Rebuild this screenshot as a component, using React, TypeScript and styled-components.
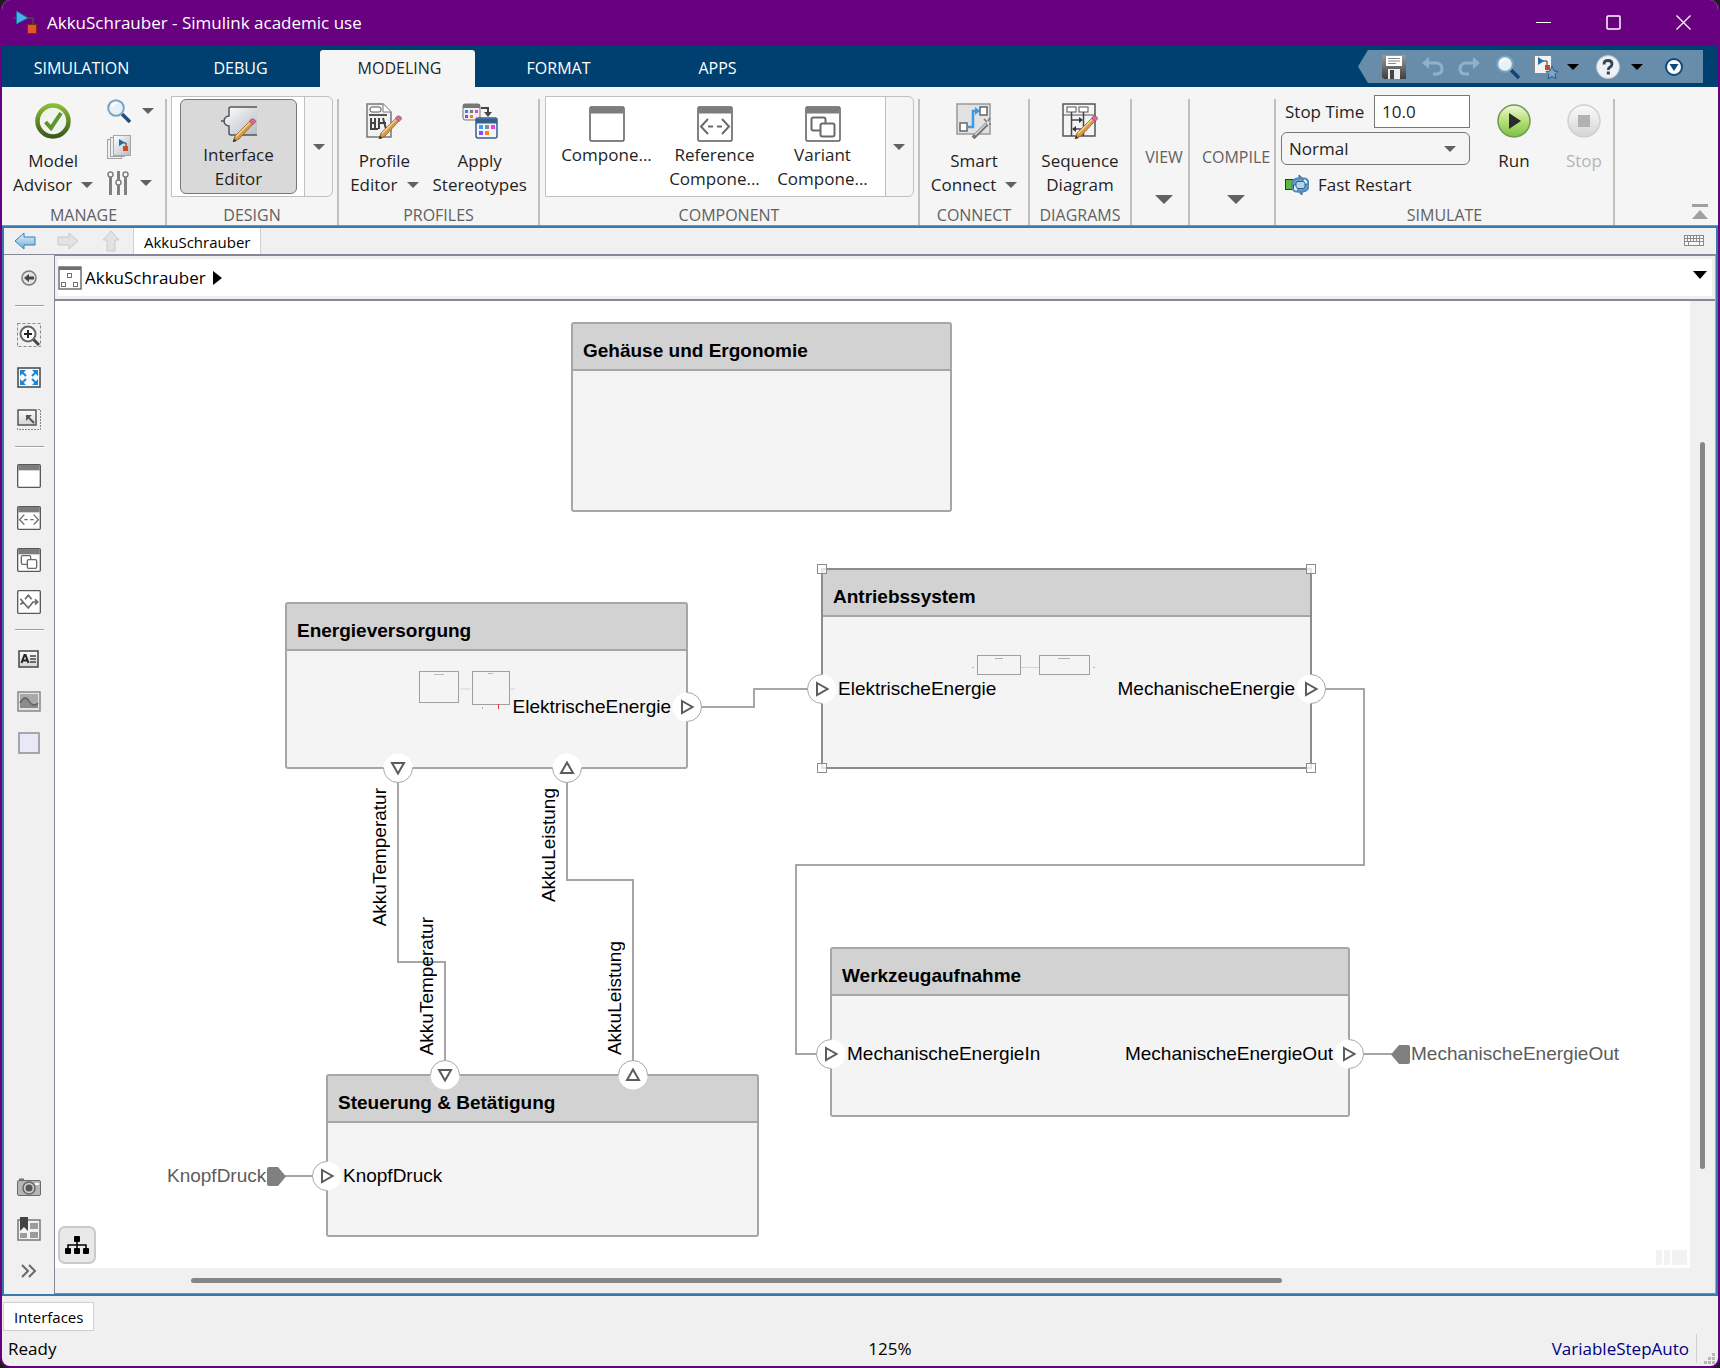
import React from "react";
import styled, { createGlobalStyle, css } from "styled-components";

const uiFont = `"Open Sans", "Noto Sans", sans-serif`;
const canvasFont = `"Liberation Sans", Arial, sans-serif`;

const color = {
  purple: "#68007f",
  navy: "#004070",
  ribbon: "#f5f5f5",
  panel: "#f0f0f0",
  frame: "#3a79ad",
  rule: "#868995",
  divider: "#c0c0c0",
  text: "#1f1f1f",
  muted: "#616161",
};

const GlobalStyle = createGlobalStyle`
  *, *::before, *::after { box-sizing: border-box; }
  body { margin: 0; background: #1c1c1c; }
  button, input, select { font: inherit; color: inherit; margin: 0; }
  button { background: none; border: 0; padding: 0; }
  svg { display: block; flex: none; }
`;

/* ---------- window ---------- */

const Window = styled.div`
  display: flex;
  flex-direction: column;
  min-height: 100vh;
  border: 2px solid ${color.purple};
  border-top: 0;
  border-radius: 10px;
  overflow: hidden;
  background: ${color.panel};
  color: ${color.text};
  font: 17px/24px ${uiFont};
`;

const TitleBar = styled.header`
  display: flex;
  align-items: center;
  height: 45px;
  padding-left: 11px;
  background: ${color.purple};
  color: #fff;
`;

const WindowTitle = styled.h1`
  flex: 1;
  margin: 0 0 0 8px;
  font-size: 17px;
  font-weight: 400;
`;

const WindowButton = styled.button`
  display: grid;
  place-items: center;
  width: 70px;
  height: 45px;
`;

const TabStrip = styled.nav`
  display: flex;
  align-items: flex-end;
  justify-content: space-between;
  height: 42px;
  padding: 0 15px 0 0;
  background: ${color.navy};
`;

const TabList = styled.div`
  display: flex;
  gap: 4px;
`;

const RibbonTab = styled.button<{ $active?: boolean }>`
  width: 155px;
  height: 37px;
  padding: 0 0 2px 4px;
  border-radius: 3px 3px 0 0;
  font-size: 16px;
  color: ${(p) => (p.$active ? color.text : "#fff")};
  background: ${(p) => (p.$active ? color.ribbon : "transparent")};
`;

const QuickAccess = styled.div`
  display: flex;
  align-items: center;
  height: 33px;
  margin-bottom: 4px;
  padding: 0 17px 0 24px;
  background: #688dab;
  clip-path: polygon(10px 0, 100% 0, 100% 100%, 10px 100%, 0 50%);
`;

const QuickButton = styled.button<{ $gap?: number }>`
  display: grid;
  place-items: center;
  margin-right: ${(p) => p.$gap ?? 14}px;
`;

/* ---------- ribbon ---------- */

const Ribbon = styled.div`
  display: flex;
  min-height: 139px;
  padding-top: 8px;
  background: ${color.ribbon};
  border-bottom: 1px solid #8f8f8f;
`;

const Section = styled.section<{ $min: number }>`
  display: flex;
  flex-direction: column;
  min-width: ${(p) => p.$min}px;
`;

const SectionBody = styled.div<{ $align?: string; $pad?: number }>`
  display: flex;
  flex: 1;
  align-items: flex-start;
  justify-content: ${(p) => p.$align ?? "center"};
  padding-left: ${(p) => p.$pad ?? 0}px;
`;

const SectionLabel = styled.h2`
  margin: 0;
  font-size: 16px;
  font-weight: 400;
  line-height: 20px;
  text-align: center;
  color: ${color.muted};
`;

const Divider = styled.div`
  width: 2px;
  margin-top: 4px;
  background: ${color.divider};
`;

const RibbonButton = styled.button<{ $dim?: boolean; $w?: number }>`
  display: flex;
  flex-direction: column;
  align-items: center;
  gap: 10px;
  padding-top: 8px;
  ${(p) => p.$w && css`width: ${p.$w}px;`}
  color: ${(p) => (p.$dim ? "#b4b4b4" : color.text)};
  & + & { margin-left: 14px; }
`;

const ButtonLabel = styled.span`
  display: flex;
  flex-direction: column;
  align-items: center;
  white-space: nowrap;
`;

const LabelLine = styled.span`
  display: flex;
  align-items: center;
  gap: 9px;
`;

const SmallTools = styled.div`
  display: flex;
  flex-direction: column;
  gap: 12px;
  margin: 4px 0 0 14px;
`;

const SmallTool = styled.button`
  display: flex;
  align-items: center;
  gap: 11px;
  height: 24px;
`;

const Gallery = styled.div`
  display: flex;
  margin-top: 1px;
  height: 101px;
  border: 1px solid ${color.divider};
  border-radius: 0 6px 6px 0;
`;

const GalleryItems = styled.div<{ $pad: string }>`
  display: flex;
  padding: ${(p) => p.$pad};
  background: #fff;
  border-right: 1px solid ${color.divider};
`;

const GalleryItem = styled.button<{ $pressed?: boolean; $w: number }>`
  display: flex;
  flex-direction: column;
  align-items: center;
  gap: 1px;
  width: ${(p) => p.$w}px;
  height: 95px;
  padding-top: 6px;
  border: 1px solid ${(p) => (p.$pressed ? "#777" : "transparent")};
  border-radius: 6px;
  background: ${(p) => (p.$pressed ? "#d9d9d9" : "transparent")};
`;

const GalleryMore = styled.button`
  display: grid;
  place-items: center;
  width: 27px;
`;

const Collapsed = styled.button`
  display: flex;
  flex: 1;
  flex-direction: column;
  align-items: center;
  padding: 50px 0 0 8px;
  gap: 26px;
  font-size: 16px;
  color: ${color.muted};
`;

const Fields = styled.div`
  display: flex;
  flex-direction: column;
  gap: 4px;
  width: 189px;
  margin-right: 16px;
`;

const FieldRow = styled.div`
  display: flex;
  align-items: center;
  justify-content: space-between;
  padding-left: 4px;
`;

const TextInput = styled.input`
  width: 96px;
  height: 33px;
  padding: 0 7px;
  border: 1px solid #777;
  background: #fff;
`;

const SelectWrap = styled.div`
  display: grid;
  align-items: center;
  & > * { grid-area: 1 / 1; }
  & > svg { justify-self: end; margin-right: 14px; pointer-events: none; }
`;

const Select = styled.select`
  appearance: none;
  height: 33px;
  padding: 0 7px;
  border: 1px solid #777;
  border-radius: 6px;
  background: ${color.ribbon};
`;

const FastRestart = styled.button`
  display: flex;
  align-items: center;
  gap: 9px;
  height: 32px;
  padding-left: 4px;
`;

const CollapseRibbon = styled.button`
  align-self: flex-end;
  margin: 0 10px 5px auto;
`;

/* ---------- editor ---------- */

const Frame = styled.main`
  display: flex;
  flex: 1;
  flex-direction: column;
  border: 2px solid ${color.frame};
`;

const NavBar = styled.div`
  display: flex;
  align-items: center;
  height: 27px;
  padding: 0 12px 0 10px;
  border-bottom: 1px solid ${color.rule};
`;

const NavButtons = styled.div`
  display: flex;
  align-items: center;
  gap: 21px;
  margin-right: 11px;
`;

const DocTab = styled.button`
  align-self: stretch;
  padding: 2px 10px 0;
  border: 1px solid #d0d0d0;
  border-width: 0 1px;
  background: #fff;
  font-size: 15px;
  color: #000;
`;

const DockTab = styled(DocTab)`
  height: 29px;
  padding: 0 10px;
  border-width: 1px;
`;

const NavEnd = styled.button`
  margin-left: auto;
`;

const Workspace = styled.div`
  display: flex;
  flex: 1;
`;

const Palette = styled.aside`
  display: flex;
  flex-direction: column;
  align-items: center;
  width: 50px;
  padding: 2px 0;
`;

const PaletteButton = styled.button`
  display: grid;
  place-items: center;
  width: 42px;
  height: 42px;
`;

const PaletteRule = styled.hr`
  width: 29px;
  height: 2px;
  margin: 6px 0 7px;
  border: 0;
  border-top: 1px solid #a0a0a0;
  background: #fff;
`;

const PaletteSpacer = styled.div`
  flex: 1;
`;

const EditorPane = styled.div`
  display: flex;
  flex: 1;
  flex-direction: column;
  min-width: 0;
  border: 1px solid ${color.rule};
  border-right-color: #a8a8a8;
`;

const Breadcrumb = styled.div`
  display: flex;
  align-items: center;
  height: 45px;
  padding: 3px;
  border-bottom: 2px solid ${color.rule};
`;

const CrumbPath = styled.div`
  display: flex;
  flex: 1;
  align-items: center;
  gap: 3px;
  height: 100%;
  padding: 0 5px 0 0;
  background: #fff;
  color: #000;
`;

const CrumbLink = styled.a`
  margin-right: 4px;
  color: inherit;
  text-decoration: none;
`;

const CrumbMenu = styled.button`
  margin: 0 0 6px auto;
`;

const CanvasGrid = styled.div`
  display: grid;
  flex: 1;
  grid-template-columns: 1fr 25px;
  grid-template-rows: 1fr 25px;
`;

const Canvas = styled.div`
  position: relative;
  background: #fff;
  color: #000;
  font: 19px/22px ${canvasFont};
  overflow: hidden;
`;

const VTrack = styled.div`
  display: grid;
  grid-template-rows: 141fr 727fr 99fr;
  justify-items: center;
`;

const HTrack = styled.div`
  display: grid;
  grid-template-columns: 136fr 1091fr 408fr;
  align-items: center;
`;

const Thumb = styled.div<{ $vertical?: boolean }>`
  border-radius: 3px;
  background: #868686;
  ${(p) =>
    p.$vertical
      ? css`grid-row: 2; width: 5px; height: 100%;`
      : css`grid-column: 2; height: 5px;`}
`;

const Wires = styled.svg`
  position: absolute;
  left: 0;
  top: 0;
`;

const BlockBox = styled.div<{ $x: number; $y: number; $w: number; $h: number; $selected?: boolean }>`
  position: absolute;
  left: ${(p) => p.$x}px;
  top: ${(p) => p.$y}px;
  width: ${(p) => p.$w}px;
  height: ${(p) => p.$h}px;
  border: 2px solid ${(p) => (p.$selected ? "#8c8c8c" : "#a6a6a6")};
  border-radius: ${(p) => (p.$selected ? 0 : 3)}px;
  background: #f4f4f4;
`;

const BlockTitle = styled.h3`
  height: 47px;
  margin: 0;
  padding: 16px 10px 0;
  border-bottom: 2px solid #a6a6a6;
  background: #d2d2d2;
  font-size: 19px;
  font-weight: 700;
  line-height: 22px;
`;

const PortBox = styled.div<{ $x: number; $y: number }>`
  position: absolute;
  left: ${(p) => p.$x - 17}px;
  top: ${(p) => p.$y - 17}px;
  width: 30px;
  height: 30px;
`;

type Side = "left" | "right" | "top" | "bottom";

const PortLabel = styled.span<{ $side: Side }>`
  position: absolute;
  white-space: nowrap;
  ${(p) =>
    p.$side === "left"
      ? css`left: 31px; top: 4px;`
      : p.$side === "right"
        ? css`right: 31px; top: 4px;`
        : css`
            left: -14px;
            ${p.$side === "bottom" ? "top" : "bottom"}: 35px;
            writing-mode: vertical-rl;
            transform: rotate(180deg);
          `}
`;

const Handle = styled.i<{ $right?: boolean; $bottom?: boolean }>`
  position: absolute;
  width: 10px;
  height: 10px;
  border: 1px solid #8c8c8c;
  background: rgba(255, 255, 255, 0.75);
  ${(p) => (p.$right ? "right" : "left")}: -6px;
  ${(p) => (p.$bottom ? "bottom" : "top")}: -6px;
`;

const Preview = styled.svg<{ $x: number; $y: number }>`
  position: absolute;
  left: ${(p) => p.$x}px;
  top: ${(p) => p.$y}px;
`;

const Terminal = styled.div<{ $x: number; $y: number; $flip?: boolean }>`
  position: absolute;
  left: ${(p) => p.$x}px;
  top: ${(p) => p.$y}px;
  display: flex;
  flex-direction: ${(p) => (p.$flip ? "row-reverse" : "row")};
  align-items: center;
  gap: 1px;
  color: #5c5c5c;
`;

const TreeButton = styled.button`
  position: absolute;
  left: 3px;
  bottom: 4px;
  display: grid;
  place-items: center;
  width: 38px;
  height: 38px;
  border: 2px solid #cacaca;
  border-radius: 7px;
  background: #e9e9e9;
`;

const Watermark = styled.div`
  position: absolute;
  right: 3px;
  bottom: 3px;
  display: flex;
  gap: 2px;
  & > i { width: 6px; height: 15px; background: #f2f2f2; }
  & > i:last-child { width: 15px; }
`;

/* ---------- bottom ---------- */

const Dock = styled.div`
  display: flex;
  padding: 6px 1px 0;
`;

const StatusBar = styled.footer`
  display: grid;
  grid-template-columns: 16fr auto 15fr;
  align-items: center;
  height: 35px;
  padding-left: 6px;
  color: #000;
`;

const StatusEnd = styled.div`
  display: flex;
  align-items: center;
  justify-content: flex-end;
  align-self: stretch;
  gap: 7px;
`;

const SolverLink = styled.a`
  color: #000080;
  text-decoration: none;
`;

const StatusRule = styled.div`
  width: 1px;
  height: 29px;
  background: #d0d0d0;
`;

const GripSlot = styled.div`
  align-self: flex-end;
  margin: 0 3px 2px 0;
`;

/* ---------- icons ---------- */

const Caret = ({ w = 12, h = 6, fill = "#616161" }: { w?: number; h?: number; fill?: string }) => (
  <svg width={w} height={h}>
    <path d={`M0 0H${w}L${w / 2} ${h}Z`} fill={fill} />
  </svg>
);

const HiddenSvg = styled.svg`
  position: absolute;
`;

const Gradients = () => (
  <HiddenSvg width="0" height="0" aria-hidden="true">
    <defs>
      <linearGradient id="steel" x1="0" y1="0" x2="1" y2="1">
        <stop offset="0" stopColor="#fff" />
        <stop offset="1" stopColor="#b5bcc3" />
      </linearGradient>
      <linearGradient id="sky" x1="0" y1="0" x2="0" y2="1">
        <stop offset="0" stopColor="#e4f3fb" />
        <stop offset="1" stopColor="#6eaed6" />
      </linearGradient>
      <linearGradient id="leaf" x1="0" y1="0" x2="0" y2="1">
        <stop offset="0" stopColor="#eff8d8" />
        <stop offset="0.5" stopColor="#b6e07a" />
        <stop offset="1" stopColor="#7cc043" />
      </linearGradient>
      <linearGradient id="ring" x1="0" y1="0" x2="0" y2="1">
        <stop offset="0" stopColor="#8bbb33" />
        <stop offset="1" stopColor="#3c5a1c" />
      </linearGradient>
      <linearGradient id="ash" x1="0" y1="0" x2="0" y2="1">
        <stop offset="0" stopColor="#fbfbfb" />
        <stop offset="1" stopColor="#d4d4d4" />
      </linearGradient>
      <linearGradient id="iron" x1="0" y1="0" x2="0" y2="1">
        <stop offset="0" stopColor="#9a9a9a" />
        <stop offset="1" stopColor="#3e3e3e" />
      </linearGradient>
    </defs>
  </HiddenSvg>
);

const Pencil = ({ x = 0, y = 0 }: { x?: number; y?: number }) => (
  <g transform={`translate(${x} ${y})`}>
    <path d="M1 24L3 18L18 3L21 6L7 21Z" fill="#d69a4a" stroke="#8a5a22" strokeWidth="0.8" />
    <path d="M4 18.500L18 4.500" stroke="#f6d496" strokeWidth="1.500" />
    <path d="M17.500 3L19.500 1Q22 0 24 3.500L21 6.500Z" fill="#dc6a92" stroke="#a8446c" strokeWidth="0.8" />
    <path d="M1 24L2 20.500L4.500 23Z" fill="#333" />
  </g>
);

const AppIcon = () => (
  <svg width="26" height="26">
    <path d="M0 8H4M12 8H20V15" fill="none" stroke="#4a4a4a" strokeWidth="1.5" />
    <path d="M3.500 1L15 8L3.500 14Z" fill="#49b2e6" stroke="#1c6c9e" />
    <rect x="14.500" y="14.500" width="9" height="9" fill="#e0562a" stroke="#7e2a0c" />
  </svg>
);

const CheckIcon = () => (
  <svg width="36" height="36">
    <circle cx="18" cy="18" r="15.5" fill="#f1f3ee" stroke="url(#ring)" strokeWidth="4.5" />
    <path d="M10.500 19L16 25L26 10" fill="none" stroke="#5d9628" strokeWidth="4" />
  </svg>
);

const Magnifier = ({ dark = "#1f4f7e" }: { dark?: string }) => (
  <svg width="24" height="24">
    <path d="M15 15L23 23" stroke={dark} strokeWidth="3.5" />
    <circle cx="9" cy="9" r="7.800" fill="#e6f1f8" stroke="#7ba4c2" strokeWidth="2" />
    <path d="M4.500 8Q6 4 10 4" fill="none" stroke="#fff" strokeWidth="2" />
  </svg>
);

const ModelPagesIcon = () => (
  <svg width="24" height="24">
    <rect x="0.500" y="4.500" width="14" height="19" fill="#eee" stroke="#a5a5a5" />
    <rect x="3.500" y="2.500" width="14" height="19" fill="#eee" stroke="#a5a5a5" />
    <rect x="6.500" y="0.500" width="17" height="20" fill="url(#steel)" stroke="#a5a5a5" />
    <path d="M12 4L18 7.500L12 11Z" fill="#1f6fa8" />
    <path d="M17 8H19V11" fill="none" stroke="#333" />
    <rect x="16" y="11" width="5" height="5" fill="#d14b22" />
  </svg>
);

const SlidersIcon = () => (
  <svg width="22" height="24" fill="#fff" stroke="#808080">
    <path d="M3.500 6V24M11.500 0V24M18.500 6V24" strokeWidth="3" />
    <circle cx="3.500" cy="3.500" r="2.500" strokeWidth="1.500" />
    <circle cx="11.500" cy="11.500" r="2.500" strokeWidth="1.500" />
    <circle cx="18.500" cy="3.500" r="2.500" strokeWidth="1.500" />
  </svg>
);

const InterfaceIcon = () => (
  <svg width="36" height="36">
    <path d="M36 1H10Q8 1 8 3V10A5 5 0 0 0 8 20V27Q8 29 10 29H36Z" fill="url(#steel)" />
    <path d="M36 1H10Q8 1 8 3V10A5 5 0 0 0 8 20V27Q8 29 10 29H36M0 15H4" fill="none" stroke="#555" strokeWidth="1.500" />
    <Pencil x={11} y={12} />
  </svg>
);

const ProfileIcon = () => (
  <svg width="36" height="36">
    <path d="M1 1H17L25 9V34H1Z" fill="#f1f1f1" stroke="#777" strokeWidth="1.500" />
    <path d="M17 1V9H25" fill="#fff" stroke="#777" />
    <rect x="4" y="4" width="11" height="5" rx="2" fill="#fff" stroke="#555" />
    <path d="M3 12H21" stroke="#555" strokeWidth="2" />
    <path d="M5 15V26M9 15V26M4 20H10M13 15V26M17 15L20 26M13 20H20M4 26H12" stroke="#444" strokeWidth="2" />
    <Pencil x={12} y={12} />
  </svg>
);

const StereotypeIcon = () => (
  <svg width="36" height="36">
    <rect x="1" y="1" width="17" height="16" rx="2" fill="#eee" stroke="#777" />
    <path d="M1 3H18" stroke="#777" strokeWidth="4" />
    <path d="M19 5H26V10" fill="none" stroke="#444" strokeWidth="2" />
    <path d="M22 9H30L26 14Z" fill="#444" />
    <rect x="3" y="7" width="3" height="3" fill="#3b7df0" />
    <rect x="8" y="7" width="3" height="3" fill="#777" />
    <rect x="13" y="7" width="3" height="3" fill="#e83be0" />
    <rect x="3" y="12" width="3" height="3" fill="#9a3bf0" />
    <rect x="8" y="12" width="3" height="3" fill="#ff7a1a" />
    <rect x="14" y="15" width="21" height="20" rx="2" fill="#f2f6fa" stroke="#35608c" strokeWidth="1.500" />
    <path d="M14 18H35" stroke="#35608c" strokeWidth="5" />
    <rect x="17" y="22" width="4" height="4" fill="#3ba0f0" />
    <rect x="23" y="22" width="4" height="4" fill="#888" />
    <rect x="29" y="22" width="4" height="4" fill="#f03be0" />
    <rect x="17" y="28" width="4" height="4" fill="#8a4bf8" />
    <rect x="23" y="28" width="4" height="4" fill="#ff7a1a" />
  </svg>
);

type Kind = "plain" | "reference" | "variant" | "adapter";

const ComponentIcon = ({ kind, size = 36 }: { kind: Kind; size?: number }) => (
  <svg width={size} height={size} viewBox="0 0 36 36">
    <rect x="1" y="1" width="34" height="34" rx="1.500" fill="#fff" stroke="#5a5a5a" strokeWidth={size < 30 ? 2 : 1.5} />
    {kind !== "adapter" && <path d={size < 30 ? "M2 5.500H34" : "M2 4.500H34"} stroke="#7d7d7d" strokeWidth={size < 30 ? 8 : 6} />}
    {kind === "reference" && (
      <path d="M11 13L4 20.500L11 28M25 13L32 20.500L25 28M11 20.500H16M20 20.500H25" fill="none" stroke="#6a6a6a" strokeWidth="2" />
    )}
    {kind === "variant" && (
      <g fill="#fff" stroke="#6a6a6a" strokeWidth="2">
        <rect x="6.500" y="11.500" width="14" height="13" rx="2" />
        <rect x="15.500" y="17.500" width="14" height="13" rx="2" />
      </g>
    )}
    {kind === "adapter" && (
      <path d="M5 13L9 18L5 22M9 18L17 27L24 18H31M12 14L17 8L22 14M27 14L31 18L27 22" fill="none" stroke="#6a6a6a" strokeWidth="2.500" />
    )}
  </svg>
);

const SmartConnectIcon = () => (
  <svg width="36" height="36">
    <rect x="1" y="1" width="33" height="30" fill="#e2e2e2" stroke="#999" strokeWidth="1.500" />
    <path d="M12 24H17V8H22" fill="none" stroke="#3a9be8" strokeWidth="2.500" />
    <path d="M19 4L24 8L19 12Z" fill="#3a9be8" />
    <rect x="24" y="4" width="7" height="8" fill="#fff" stroke="#666" strokeWidth="1.500" />
    <rect x="4" y="20" width="7" height="8" fill="#fff" stroke="#666" strokeWidth="1.500" />
    <path d="M17 35L31 21" stroke="#777" strokeWidth="4" />
    <path d="M19 32L30 21" stroke="#ddd" strokeWidth="1.500" />
    <path d="M28 16L31 19M34 15L32 18M35 21L33 21" stroke="#777" strokeWidth="1.500" />
  </svg>
);

const SequenceIcon = () => (
  <svg width="36" height="36">
    <rect x="1" y="1" width="32" height="32" fill="#f4f4f4" stroke="#555" strokeWidth="1.500" />
    <path d="M1 12H33" stroke="#555" />
    <rect x="5" y="4" width="9" height="5" fill="#fff" stroke="#555" />
    <rect x="17" y="4" width="9" height="5" fill="#fff" stroke="#555" />
    <path d="M9.500 9V33M21.500 9V33M9.500 17H19M21.500 26H12" stroke="#444" strokeWidth="1.500" />
    <path d="M17 14L21 17L17 20ZM14 23L10 26L14 29Z" fill="#333" />
    <Pencil x={12} y={12} />
  </svg>
);

const RunIcon = () => (
  <svg width="36" height="36">
    <circle cx="18" cy="18" r="16" fill="url(#leaf)" stroke="#6f9950" strokeWidth="1.500" />
    <path d="M13 10L25 18L13 26Z" fill="#2b2b2b" />
  </svg>
);

const StopIcon = () => (
  <svg width="36" height="36">
    <circle cx="18" cy="18" r="16" fill="url(#ash)" stroke="#cfcfcf" strokeWidth="1.500" />
    <rect x="12" y="12" width="12" height="12" fill="#b2b2b2" />
  </svg>
);

const FastRestartIcon = () => (
  <svg width="24" height="20">
    <rect x="0.500" y="4.500" width="8" height="10" fill="#5cb83f" stroke="#333" />
    <path d="M7 10Q7 3 14 3V0L19 4.500L14 9V6Q10.500 6 10.500 10ZM24 9Q24 17 17 17V20L12 15.500L17 11V14Q20.500 14 20.500 9Z" fill="#6ea6cf" stroke="#2c648f" />
    <rect x="11" y="6.500" width="9" height="7" rx="2" fill="#b4d3e8" stroke="#2c648f" />
    <path d="M7 10Q7 3.500 14 3.500H19Q23.500 3.500 23.500 10T17 16.500H11Q7 16 7 10Z" fill="none" stroke="#4d8ab8" strokeWidth="2" />
  </svg>
);

const CollapseIcon = () => (
  <svg width="16" height="16" fill="#a0a0a0">
    <rect width="16" height="3" />
    <path d="M8 6L16 15H0Z" />
  </svg>
);

const SaveIcon = () => (
  <svg width="24" height="24">
    <path d="M0 0H24V24H2L0 22Z" fill="url(#iron)" />
    <rect x="4" y="1" width="16" height="10" fill="#fff" />
    <path d="M6 3.500H18M6 6H18M6 8.500H14" stroke="#8a8a8a" />
    <rect x="6" y="14" width="12" height="10" fill="#eee" />
    <rect x="8" y="15" width="4" height="9" fill="#444" />
  </svg>
);

const UndoIcon = ({ flip }: { flip?: boolean }) => (
  <svg width="22" height="20" viewBox="0 0 22 20">
    <g transform={flip ? "matrix(-1 0 0 1 22 0)" : undefined}>
      <path d="M4 6H15Q20 7 20 12T14 17H11" fill="none" stroke="#8fb2cc" strokeWidth="3" />
      <path d="M0 6L7 0V12Z" fill="#8fb2cc" />
    </g>
  </svg>
);

const LibraryIcon = () => (
  <svg width="24" height="24">
    <rect x="0.500" y="0.500" width="17" height="18" fill="#f3f3f3" stroke="#888" />
    <path d="M4 2L10 6L4 10Z" fill="#1f6fa8" />
    <path d="M9 6H13V10" fill="none" stroke="#333" />
    <rect x="11" y="10" width="5" height="5" fill="#cc4422" />
    <path d="M18 11L20 16L24 16.500L21 19.500L22 24L18 21.500L14 24L15 19.500L12 16.500L16 16Z" fill="#7da7c8" stroke="#2d5b84" />
  </svg>
);

const HelpIcon = () => (
  <svg width="24" height="24">
    <circle cx="12" cy="12" r="11.500" fill="#eef1f4" stroke="#b9c6d1" />
    <path d="M8 9.500Q8 5.500 12 5.500T16 9Q16 11 13.500 12.500Q12.300 13.300 12.300 15" fill="none" stroke="#344558" strokeWidth="2.800" />
    <rect x="10.800" y="16.500" width="3" height="3" fill="#344558" />
  </svg>
);

const OptionsIcon = () => (
  <svg width="18" height="18">
    <circle cx="9" cy="9" r="8" fill="#fff" stroke="#0b4a7c" strokeWidth="2" />
    <path d="M4.500 6H13.500L9 13Z" fill="#0b4a7c" />
  </svg>
);

const ArrowIcon = ({ dir, on }: { dir: "left" | "right" | "up"; on?: boolean }) => {
  const turn = { left: 0, right: 180, up: 90 }[dir];
  return (
    <svg width="22" height="22" viewBox="0 0 22 22">
      <path
        d="M1 11L10 3V7H21V15H10V19Z"
        transform={`rotate(${turn} 11 11)`}
        fill={on ? "url(#sky)" : "#e2e2e2"}
        stroke={on ? "#3d7cae" : "#c9c9c9"}
      />
    </svg>
  );
};

const KeyboardIcon = () => (
  <svg width="20" height="12" fill="none" stroke="#8a8a8a">
    <rect x="0.500" y="0.500" width="19" height="10" fill="#f8f8f8" />
    <path d="M0 3.500H20M0 6.500H20M3.500 0V7M6.500 0V7M9.500 0V7M12.500 0V7M15.500 0V7M4.500 7V11M15.500 7V11" />
  </svg>
);

const ModelIcon = () => (
  <svg width="24" height="24" fill="#fff" stroke="#707070">
    <rect x="1" y="1" width="22" height="22" strokeWidth="1.500" />
    <path d="M1 2.500H23" strokeWidth="3" />
    <rect x="9.500" y="7.500" width="4" height="4" />
    <rect x="3.500" y="16.500" width="4" height="4" />
    <rect x="15.500" y="16.500" width="4" height="4" />
  </svg>
);

const HideIcon = () => (
  <svg width="16" height="16">
    <circle cx="8" cy="8" r="7" fill="#e2e2e2" stroke="#7a7a7a" strokeWidth="1.500" />
    <path d="M3 8L8 4V6.500H13V9.500H8V12Z" fill="#444" />
  </svg>
);

const ZoomRegionIcon = () => (
  <svg width="24" height="24">
    <rect x="0.500" y="0.500" width="23" height="23" fill="none" stroke="#888" strokeDasharray="3 2" />
    <path d="M16 16L22 22" stroke="#444" strokeWidth="3" />
    <circle cx="11" cy="11" r="7.500" fill="#fafafa" stroke="#666" strokeWidth="2" />
    <path d="M7 11H15M11 7V15" stroke="#222" strokeWidth="2" />
  </svg>
);

const FitIcon = () => (
  <svg width="24" height="21">
    <rect x="1" y="1" width="22" height="19" fill="#f4f9fd" stroke="#444" strokeWidth="1.500" />
    <path d="M3 3H9L3 9ZM15 3H21V9ZM3 12L9 18H3ZM21 12V18H15Z" fill="#1f86d6" />
    <path d="M5 5L9 9M19 5L15 9M5 16L9 12M19 16L15 12" stroke="#1f86d6" strokeWidth="2" />
  </svg>
);

const ShrinkIcon = () => (
  <svg width="24" height="21">
    <path d="M21 0.500H23.500V20.500H0.500V18" fill="none" stroke="#888" strokeDasharray="2 1" />
    <rect x="1" y="1" width="18" height="15" fill="url(#ash)" stroke="#555" strokeWidth="1.500" />
    <path d="M9 6H15L9 12Z" fill="#555" />
    <path d="M11 8L17 14" stroke="#555" strokeWidth="2" />
  </svg>
);

const AnnotationIcon = () => (
  <svg width="22" height="18">
    <rect x="1" y="1" width="19" height="16" fill="url(#ash)" stroke="#444" strokeWidth="1.500" />
    <path d="M3.500 13L6.500 5H7.500L10.500 13M5 10.500H9.500" fill="none" stroke="#222" strokeWidth="2" />
    <path d="M12 6H18M12 9H18M12 12H18" stroke="#444" strokeWidth="1.500" />
  </svg>
);

const ImageIcon = () => (
  <svg width="24" height="21">
    <rect x="1" y="1" width="22" height="19" fill="#e4e4e4" stroke="#888" strokeWidth="1.500" />
    <rect x="3" y="3" width="18" height="14" fill="#a9a9a9" />
    <path d="M3 12Q8 3 12 10T21 12V17H3Z" fill="#8b8b8b" />
    <path d="M3 12Q8 3 12 10T21 12" fill="none" stroke="#5f5f5f" strokeWidth="1.500" />
  </svg>
);

const AreaIcon = () => (
  <svg width="22" height="22">
    <rect x="1" y="1" width="20" height="20" fill="#e9e8f8" stroke="#8e8e94" strokeWidth="1.500" />
  </svg>
);

const CameraIcon = () => (
  <svg width="24" height="19">
    <rect x="2" y="0.500" width="5" height="3" fill="#777" />
    <rect x="0.500" y="2.500" width="23" height="15" rx="1.500" fill="#b5b5b5" stroke="#6a6a6a" />
    <circle cx="12" cy="10" r="6" fill="#ccc" stroke="#666" strokeWidth="1.500" />
    <circle cx="12" cy="10" r="3.500" fill="#555" />
    <rect x="18" y="5" width="4" height="2" fill="#fff" />
  </svg>
);

const BrowserIcon = () => (
  <svg width="24" height="24">
    <rect x="1" y="3" width="22" height="20" fill="#f2f2f2" stroke="#777" strokeWidth="1.500" />
    <path d="M13 6H21V12H13ZM13 15H21V21H13ZM3 16H10V21H3Z" fill="#9c9c9c" />
    <path d="M3 0H11V14L7 10L3 14Z" fill="#444" />
  </svg>
);

const ChevronsIcon = () => (
  <svg width="16" height="14" fill="none" stroke="#6a6a6a" strokeWidth="2">
    <path d="M1 1L7 7L1 13M8 1L14 7L8 13" />
  </svg>
);

const TreeIcon = () => (
  <svg width="24" height="18">
    <path d="M12 5V13M3 13V9H21V13" fill="none" stroke="#000" strokeWidth="1.500" />
    <rect x="9" y="0" width="6" height="6" rx="1" />
    <rect x="0" y="12" width="6" height="6" rx="1" />
    <rect x="9" y="12" width="6" height="6" rx="1" />
    <rect x="18" y="12" width="6" height="6" rx="1" />
  </svg>
);

const GripIcon = () => (
  <svg width="11" height="11" fill="#b8b8b8">
    <path d="M0 8H3V11H0ZM4 8H7V11H4ZM8 8H11V11H8ZM4 4H7V7H4ZM8 4H11V7H8ZM8 0H11V3H8Z" />
  </svg>
);

const TerminalMark = ({ flip }: { flip?: boolean }) => (
  <svg width="19" height="19" viewBox="0 0 19 19">
    <path d="M2 0H11L19 9.500L11 19H2Q0 19 0 17V2Q0 0 2 0Z" fill="#808080" transform={flip ? "rotate(180 9.500 9.500)" : undefined} />
  </svg>
);

/* ---------- diagram ---------- */

const sideTurn = { left: 180, right: 0, top: 270, bottom: 90 };
const arrowTurn = { right: 0, down: 90, up: 270 };

type PortProps = { x: number; y: number; side: Side; arrow?: keyof typeof arrowTurn; name: string };

const Port = ({ x, y, side, arrow = "right", name }: PortProps) => (
  <PortBox $x={x} $y={y}>
    <svg width="30" height="30" viewBox="0 0 30 30" fill="none">
      <circle cx="15" cy="15" r="14.500" fill="#fff" />
      <path d="M15 0.500A14.500 14.500 0 0 1 15 29.500" stroke="#a6a6a6" transform={`rotate(${sideTurn[side]} 15 15)`} />
      <path d="M10 9L20.500 15L10 21Z" stroke="#5c5c5c" strokeWidth="2" transform={`rotate(${arrowTurn[arrow]} 15 15)`} />
    </svg>
    <PortLabel $side={side}>{name}</PortLabel>
  </PortBox>
);

type BlockProps = {
  x: number;
  y: number;
  w: number;
  h: number;
  title: string;
  selected?: boolean;
  children?: React.ReactNode;
};

const Block = ({ x, y, w, h, title, selected, children }: BlockProps) => (
  <BlockBox $x={x} $y={y} $w={w} $h={h} $selected={selected}>
    <BlockTitle>{title}</BlockTitle>
    {children}
    {selected && (
      <>
        <Handle />
        <Handle $right />
        <Handle $bottom />
        <Handle $right $bottom />
      </>
    )}
  </BlockBox>
);

const Diagram = () => (
  <>
    <Wires width="1600" height="960" fill="none" stroke="#a6a6a6" strokeWidth="2">
      <path d="M646 406H699V388H753" />
      <path d="M1271 388H1309V564H741V753H762" />
      <path d="M343 481V661H390V760" />
      <path d="M512 481V579H578V760" />
      <path d="M230 875H258" />
      <path d="M1308 753H1337" />
    </Wires>

    <Block x={516} y={21} w={381} h={190} title="Gehäuse und Ergonomie" />

    <Block x={230} y={301} w={403} h={167} title="Energieversorgung">
      <Preview $x={131} $y={65} width="98" height="42" fill="none" stroke="#a0a0a0">
        <rect x="1.500" y="2.500" width="39" height="31" />
        <rect x="54.500" y="2.500" width="37" height="33" />
        <path d="M42 20H53M92 20H97" stroke="#d4d4d4" />
        <path d="M16 5.500H26M70 4.500H75M64.500 38V40" stroke="#b8b8b8" />
        <path d="M80.500 35V40" stroke="#e03a3a" />
      </Preview>
      <Port x={402} y={105} side="right" name="ElektrischeEnergie" />
      <Port x={113} y={166} side="bottom" arrow="down" name="AkkuTemperatur" />
      <Port x={282} y={166} side="bottom" arrow="up" name="AkkuLeistung" />
    </Block>

    <Block x={766} y={267} w={491} h={201} title="Antriebssystem" selected>
      <Preview $x={148} $y={83} width="126" height="26" fill="none" stroke="#a0a0a0">
        <rect x="6.500" y="2.500" width="43" height="19" />
        <rect x="68.500" y="2.500" width="50" height="19" />
        <path d="M50 14.500H68" stroke="#d4d4d4" />
        <path d="M24 5.500H32M87 5.500H99M1 14.500H3M122 14.500H124" stroke="#b0b0b0" />
      </Preview>
      <Port x={1} y={121} side="left" name="ElektrischeEnergie" />
      <Port x={490} y={121} side="right" name="MechanischeEnergie" />
    </Block>

    <Block x={775} y={646} w={520} h={170} title="Werkzeugaufnahme">
      <Port x={1} y={107} side="left" name="MechanischeEnergieIn" />
      <Port x={519} y={107} side="right" name="MechanischeEnergieOut" />
    </Block>

    <Block x={271} y={773} w={433} h={163} title="Steuerung & Betätigung">
      <Port x={119} y={1} side="top" arrow="down" name="AkkuTemperatur" />
      <Port x={307} y={1} side="top" arrow="up" name="AkkuLeistung" />
      <Port x={1} y={102} side="left" name="KnopfDruck" />
    </Block>

    <Terminal $x={112} $y={864}>
      KnopfDruck
      <TerminalMark />
    </Terminal>
    <Terminal $x={1336} $y={742} $flip>
      MechanischeEnergieOut
      <TerminalMark flip />
    </Terminal>
  </>
);

/* ---------- page ---------- */

const tabs = ["SIMULATION", "DEBUG", "MODELING", "FORMAT", "APPS"];

const App = () => (
  <>
    <GlobalStyle />
    <Gradients />
    <Window>
      <TitleBar>
        <AppIcon />
        <WindowTitle>AkkuSchrauber - Simulink academic use</WindowTitle>
        <WindowButton aria-label="Minimize">
          <svg width="15" height="15" stroke="#fff"><path d="M0 7.500H15" /></svg>
        </WindowButton>
        <WindowButton aria-label="Maximize">
          <svg width="15" height="15" fill="none" stroke="#fff" strokeWidth="1.500">
            <rect x="1" y="1" width="13" height="13" rx="1" />
          </svg>
        </WindowButton>
        <WindowButton aria-label="Close">
          <svg width="15" height="15" stroke="#fff" strokeWidth="1.300"><path d="M0.500 0.500L14.500 14.500M14.500 0.500L0.500 14.500" /></svg>
        </WindowButton>
      </TitleBar>

      <TabStrip>
        <TabList role="tablist">
          {tabs.map((t) => (
            <RibbonTab key={t} role="tab" aria-selected={t === "MODELING"} $active={t === "MODELING"}>
              {t}
            </RibbonTab>
          ))}
        </TabList>
        <QuickAccess>
          <QuickButton aria-label="Save" $gap={16}><SaveIcon /></QuickButton>
          <QuickButton aria-label="Undo"><UndoIcon /></QuickButton>
          <QuickButton aria-label="Redo" $gap={16}><UndoIcon flip /></QuickButton>
          <QuickButton aria-label="Find"><Magnifier dark="#0e4677" /></QuickButton>
          <QuickButton aria-label="Library Browser" $gap={9}><LibraryIcon /></QuickButton>
          <QuickButton aria-label="Favorites" $gap={17}><Caret fill="#000" /></QuickButton>
          <QuickButton aria-label="Help" $gap={11}><HelpIcon /></QuickButton>
          <QuickButton aria-label="Help menu" $gap={22}><Caret fill="#000" /></QuickButton>
          <QuickButton aria-label="Options" $gap={3}><OptionsIcon /></QuickButton>
        </QuickAccess>
      </TabStrip>

      <Ribbon>
        <Section $min={163}>
          <SectionBody $align="flex-start" $pad={11}>
            <RibbonButton>
              <CheckIcon />
              <ButtonLabel>
                <span>Model</span>
                <LabelLine>Advisor <Caret /></LabelLine>
              </ButtonLabel>
            </RibbonButton>
            <SmallTools>
              <SmallTool aria-label="Find"><Magnifier /><Caret /></SmallTool>
              <SmallTool aria-label="Compare models"><ModelPagesIcon /></SmallTool>
              <SmallTool aria-label="Environment"><SlidersIcon /><Caret /></SmallTool>
            </SmallTools>
          </SectionBody>
          <SectionLabel>MANAGE</SectionLabel>
        </Section>
        <Divider />

        <Section $min={170}>
          <SectionBody>
            <Gallery>
              <GalleryItems $pad="2px 7px 2px 8px">
                <GalleryItem $pressed $w={117} aria-pressed="true">
                  <InterfaceIcon />
                  <ButtonLabel>
                    <span>Interface</span>
                    <span>Editor</span>
                  </ButtonLabel>
                </GalleryItem>
              </GalleryItems>
              <GalleryMore aria-label="More design tools"><Caret /></GalleryMore>
            </Gallery>
          </SectionBody>
          <SectionLabel>DESIGN</SectionLabel>
        </Section>
        <Divider />

        <Section $min={199}>
          <SectionBody>
            <RibbonButton>
              <ProfileIcon />
              <ButtonLabel>
                <span>Profile</span>
                <LabelLine>Editor <Caret /></LabelLine>
              </ButtonLabel>
            </RibbonButton>
            <RibbonButton>
              <StereotypeIcon />
              <ButtonLabel>
                <span>Apply</span>
                <span>Stereotypes</span>
              </ButtonLabel>
            </RibbonButton>
          </SectionBody>
          <SectionLabel>PROFILES</SectionLabel>
        </Section>
        <Divider />

        <Section $min={378}>
          <SectionBody>
            <Gallery>
              <GalleryItems $pad="2px 8px 2px 7px">
                <GalleryItem $w={108}>
                  <ComponentIcon kind="plain" />
                  <ButtonLabel>Compone...</ButtonLabel>
                </GalleryItem>
                <GalleryItem $w={108}>
                  <ComponentIcon kind="reference" />
                  <ButtonLabel><span>Reference</span><span>Compone...</span></ButtonLabel>
                </GalleryItem>
                <GalleryItem $w={108}>
                  <ComponentIcon kind="variant" />
                  <ButtonLabel><span>Variant</span><span>Compone...</span></ButtonLabel>
                </GalleryItem>
              </GalleryItems>
              <GalleryMore aria-label="More components"><Caret /></GalleryMore>
            </Gallery>
          </SectionBody>
          <SectionLabel>COMPONENT</SectionLabel>
        </Section>
        <Divider />

        <Section $min={108}>
          <SectionBody>
            <RibbonButton>
              <SmartConnectIcon />
              <ButtonLabel>
                <span>Smart</span>
                <LabelLine>Connect <Caret /></LabelLine>
              </ButtonLabel>
            </RibbonButton>
          </SectionBody>
          <SectionLabel>CONNECT</SectionLabel>
        </Section>
        <Divider />

        <Section $min={100}>
          <SectionBody>
            <RibbonButton>
              <SequenceIcon />
              <ButtonLabel>
                <span>Sequence</span>
                <span>Diagram</span>
              </ButtonLabel>
            </RibbonButton>
          </SectionBody>
          <SectionLabel>DIAGRAMS</SectionLabel>
        </Section>
        <Divider />

        <Section $min={56}>
          <Collapsed>VIEW<Caret w={18} h={9} /></Collapsed>
        </Section>
        <Divider />
        <Section $min={84}>
          <Collapsed>COMPILE<Caret w={18} h={9} /></Collapsed>
        </Section>
        <Divider />

        <Section $min={337}>
          <SectionBody $align="flex-start" $pad={5}>
            <Fields>
              <FieldRow>
                <label htmlFor="stop-time">Stop Time</label>
                <TextInput id="stop-time" defaultValue="10.0" />
              </FieldRow>
              <SelectWrap>
                <Select aria-label="Simulation mode" defaultValue="Normal">
                  <option>Normal</option>
                </Select>
                <Caret />
              </SelectWrap>
              <FastRestart><FastRestartIcon />Fast Restart</FastRestart>
            </Fields>
            <RibbonButton $w={56}><RunIcon /><ButtonLabel>Run</ButtonLabel></RibbonButton>
            <RibbonButton $w={56} $dim disabled><StopIcon /><ButtonLabel>Stop</ButtonLabel></RibbonButton>
          </SectionBody>
          <SectionLabel>SIMULATE</SectionLabel>
        </Section>
        <Divider />
        <CollapseRibbon aria-label="Collapse toolstrip"><CollapseIcon /></CollapseRibbon>
      </Ribbon>

      <Frame>
        <NavBar>
          <NavButtons>
            <button aria-label="Back"><ArrowIcon dir="left" on /></button>
            <button aria-label="Forward"><ArrowIcon dir="right" /></button>
            <button aria-label="Up to parent"><ArrowIcon dir="up" /></button>
          </NavButtons>
          <DocTab>AkkuSchrauber</DocTab>
          <NavEnd aria-label="Keyboard shortcuts"><KeyboardIcon /></NavEnd>
        </NavBar>

        <Workspace>
          <Palette>
            <PaletteButton aria-label="Hide browser"><HideIcon /></PaletteButton>
            <PaletteRule />
            <PaletteButton aria-label="Zoom"><ZoomRegionIcon /></PaletteButton>
            <PaletteButton aria-label="Fit to view"><FitIcon /></PaletteButton>
            <PaletteButton aria-label="Original size"><ShrinkIcon /></PaletteButton>
            <PaletteRule />
            <PaletteButton aria-label="Component"><ComponentIcon kind="plain" size={24} /></PaletteButton>
            <PaletteButton aria-label="Reference component"><ComponentIcon kind="reference" size={24} /></PaletteButton>
            <PaletteButton aria-label="Variant component"><ComponentIcon kind="variant" size={24} /></PaletteButton>
            <PaletteButton aria-label="Adapter"><ComponentIcon kind="adapter" size={24} /></PaletteButton>
            <PaletteRule />
            <PaletteButton aria-label="Annotation"><AnnotationIcon /></PaletteButton>
            <PaletteButton aria-label="Image"><ImageIcon /></PaletteButton>
            <PaletteButton aria-label="Area"><AreaIcon /></PaletteButton>
            <PaletteSpacer />
            <PaletteButton aria-label="Screenshot"><CameraIcon /></PaletteButton>
            <PaletteButton aria-label="Viewmarks"><BrowserIcon /></PaletteButton>
            <PaletteButton aria-label="More"><ChevronsIcon /></PaletteButton>
          </Palette>

          <EditorPane>
            <Breadcrumb>
              <CrumbPath>
                <ModelIcon />
                <CrumbLink href="#model">AkkuSchrauber</CrumbLink>
                <svg width="9" height="14"><path d="M0 0L9 7L0 14Z" /></svg>
                <CrumbMenu aria-label="Path history"><Caret w={14} h={8} fill="#000" /></CrumbMenu>
              </CrumbPath>
            </Breadcrumb>

            <CanvasGrid>
              <Canvas>
                <Diagram />
                <TreeButton aria-label="Model browser"><TreeIcon /></TreeButton>
                <Watermark><i /><i /><i /></Watermark>
              </Canvas>
              <VTrack><Thumb $vertical /></VTrack>
              <HTrack><Thumb /></HTrack>
            </CanvasGrid>
          </EditorPane>
        </Workspace>
      </Frame>

      <Dock>
        <DockTab>Interfaces</DockTab>
      </Dock>
      <StatusBar>
        <span>Ready</span>
        <span>125%</span>
        <StatusEnd>
          <SolverLink href="#solver">VariableStepAuto</SolverLink>
          <StatusRule />
          <GripSlot><GripIcon /></GripSlot>
        </StatusEnd>
      </StatusBar>
    </Window>
  </>
);

export default App;
